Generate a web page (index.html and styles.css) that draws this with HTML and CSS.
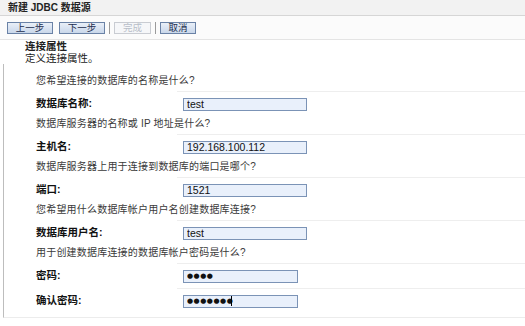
FILE: index.html
```html
<!DOCTYPE html>
<html lang="zh-CN">
<head>
    <meta charset="UTF-8">
    <meta name="viewport" content="width=device-width, initial-scale=1.0">
    <title>新建 JDBC 数据源</title>
    <link rel="stylesheet" href="styles.css">
</head>
<body>

    <div class="titlebar">新建 JDBC 数据源</div>

    <div class="toolbar">
        <button class="btn btn-wide">上一步</button>
        <button class="btn btn-wide">下一步</button>
        <span class="sep"></span>
        <button class="btn btn-disabled" disabled>完成</button>
        <span class="sep"></span>
        <button class="btn">取消</button>
    </div>

    <div class="section-head">
        <div class="section-title">连接属性</div>
        <div>定义连接属性。</div>
    </div>

    <div class="form-box">
        <div class="question">您希望连接的数据库的名称是什么?</div>
        <div class="field">
            <label>数据库名称:</label>
            <div class="value"><input type="text" value="test"></div>
        </div>

        <div class="question">数据库服务器的名称或 IP 地址是什么?</div>
        <div class="field">
            <label>主机名:</label>
            <div class="value"><input type="text" value="192.168.100.112"></div>
        </div>

        <div class="question">数据库服务器上用于连接到数据库的端口是哪个?</div>
        <div class="field">
            <label>端口:</label>
            <div class="value"><input type="text" value="1521"></div>
        </div>

        <div class="question">您希望用什么数据库帐户用户名创建数据库连接?</div>
        <div class="field">
            <label>数据库用户名:</label>
            <div class="value"><input type="text" value="test"></div>
        </div>

        <div class="question">用于创建数据库连接的数据库帐户密码是什么?</div>
        <div class="field">
            <label>密码:</label>
            <div class="value"><input type="text" class="pw" value="●●●●"></div>
        </div>
        <div class="field">
            <label>确认密码:</label>
            <div class="value"><input type="text" class="pw" value="●●●●●●●"><span class="caret"></span></div>
        </div>
    </div>

</body>
</html>
```

FILE: styles.css
```css
body {
    margin: 0;
    font-family: "Liberation Sans", "Noto Sans CJK SC", sans-serif;
    font-size: 10px;
    color: #222;
    background: #fff;
}

.titlebar {
    height: 16px;
    line-height: 15px;
    padding-left: 8px;
    font-weight: bold;
    font-size: 10px;
    background: #f2f2f2;
    border-bottom: 1px solid #d6d6d6;
    box-sizing: border-box;
}

.toolbar {
    display: flex;
    align-items: center;
    height: 23px;
    padding-left: 7px;
    background: #fbfbfb;
    border-bottom: 1px solid #e4e4e4;
}

.btn {
    height: 12px;
    width: 36px;
    padding: 0;
    margin-right: 6px;
    font-family: inherit;
    font-size: 9.5px;
    line-height: 10px;
    color: #1c2d4d;
    background: linear-gradient(#e9eff8, #c9d7ea);
    border: 1px solid #6a82a6;
}

.btn-wide {
    width: 46px;
}

.btn-disabled {
    width: 37px;
    color: #b8bec8;
    background: #f6f7f9;
    border-color: #c9ccd2;
}

.sep {
    width: 1px;
    height: 12px;
    background: #9a9a9a;
    margin: 0 4px 0 -2px;
}

.section-head {
    padding-left: 25px;
    line-height: 12px;
    font-size: 10.5px;
}

.section-title {
    font-weight: bold;
}

.form-box {
    margin-left: 3px;
    padding: 9px 0 4px 32px;
    border-left: 1px solid #bdbdbd;
    border-bottom: 1px solid #ececec;
}

.question {
    height: 18px;
    line-height: 16px;
    color: #3a3a3a;
    letter-spacing: 0.2px;
}

.field {
    display: flex;
    height: 25px;
}

.field label {
    width: 141px;
    font-weight: bold;
    font-size: 10.5px;
    line-height: 25px;
    color: #111;
}

.value {
    flex: 1;
    display: flex;
    align-items: center;
    padding-left: 6px;
    border-top: 1px solid #eeeeee;
}

.value input {
    width: 124px;
    height: 13px;
    box-sizing: border-box;
    padding: 0 3px;
    font-family: "Liberation Sans", sans-serif;
    font-size: 10.5px;
    color: #111;
    background: #e9f0fb;
    border: 1px solid #7b93b6;
    outline: none;
}

.value input.pw {
    width: 115px;
    font-family: "DejaVu Sans", sans-serif;
    font-size: 7px;
    letter-spacing: 0.5px;
}

.caret {
    width: 1px;
    height: 10px;
    background: #000;
    margin-left: -67px;
}
```
